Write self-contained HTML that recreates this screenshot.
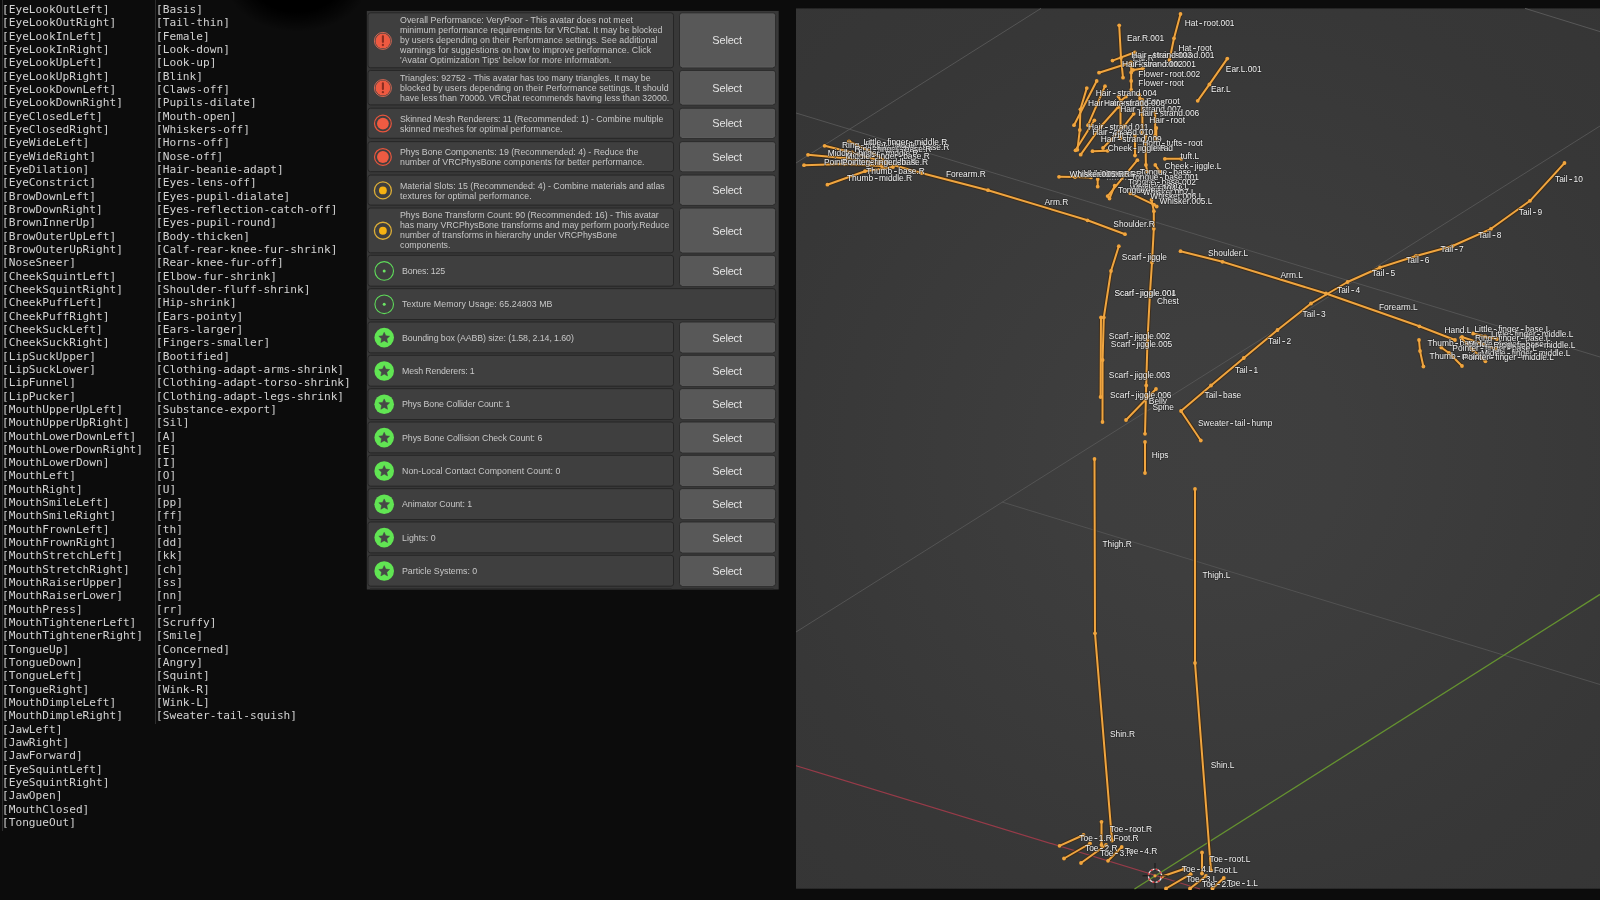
<!DOCTYPE html>
<html lang="en"><head><meta charset="utf-8"><title>Avatar blendshapes, performance stats and armature</title>
<style>
html,body{margin:0;padding:0;background:#0c0c0c;}
body{width:1600px;height:900px;position:relative;overflow:hidden;font-family:"Liberation Sans",sans-serif;}
.blob{position:absolute;left:225px;top:-72px;width:144px;height:104px;background:radial-gradient(ellipse closest-side at center,#000 0%,#000 62%,rgba(0,0,0,0.55) 80%,rgba(0,0,0,0) 100%);}
.col{position:absolute;top:3.2px;margin:0;font-family:"DejaVu Sans Mono","Liberation Mono",monospace;font-size:11.16px;line-height:13.333px;color:#d2d2d2;white-space:nowrap;}
.vl{position:absolute;width:1px;background:#2e2e2e;top:0;}
#c1{left:2.25px;}
#c2{left:155.7px;}
.col div{height:13.333px;}
#panel{position:absolute;left:0;top:0;}
.txt{position:absolute;left:400.2px;font-size:8.8px;line-height:10px;color:#c8c8c8;white-space:pre;}
.txt.s{left:402.4px;}
.bt{position:absolute;left:678.8px;width:96.1px;line-height:14px;color:#e4e4e4;font-size:11px;letter-spacing:-0.2px;text-align:center;}
#vp{position:absolute;left:796px;top:8px;width:804px;height:882px;overflow:hidden;}
#vp svg{position:absolute;left:0;top:0;}
.col,.txt,.bt,#vp{will-change:transform;}
</style></head><body>
<div class="blob"></div>
<div class="vl" style="left:2px;height:831px"></div><div class="vl" style="left:154.6px;height:724px"></div>

<div class="col" id="c1"><div>[EyeLookOutLeft]</div><div>[EyeLookOutRight]</div><div>[EyeLookInLeft]</div><div>[EyeLookInRight]</div><div>[EyeLookUpLeft]</div><div>[EyeLookUpRight]</div><div>[EyeLookDownLeft]</div><div>[EyeLookDownRight]</div><div>[EyeClosedLeft]</div><div>[EyeClosedRight]</div><div>[EyeWideLeft]</div><div>[EyeWideRight]</div><div>[EyeDilation]</div><div>[EyeConstrict]</div><div>[BrowDownLeft]</div><div>[BrowDownRight]</div><div>[BrownInnerUp]</div><div>[BrowOuterUpLeft]</div><div>[BrowOuterUpRight]</div><div>[NoseSneer]</div><div>[CheekSquintLeft]</div><div>[CheekSquintRight]</div><div>[CheekPuffLeft]</div><div>[CheekPuffRight]</div><div>[CheekSuckLeft]</div><div>[CheekSuckRight]</div><div>[LipSuckUpper]</div><div>[LipSuckLower]</div><div>[LipFunnel]</div><div>[LipPucker]</div><div>[MouthUpperUpLeft]</div><div>[MouthUpperUpRight]</div><div>[MouthLowerDownLeft]</div><div>[MouthLowerDownRight]</div><div>[MouthLowerDown]</div><div>[MouthLeft]</div><div>[MouthRight]</div><div>[MouthSmileLeft]</div><div>[MouthSmileRight]</div><div>[MouthFrownLeft]</div><div>[MouthFrownRight]</div><div>[MouthStretchLeft]</div><div>[MouthStretchRight]</div><div>[MouthRaiserUpper]</div><div>[MouthRaiserLower]</div><div>[MouthPress]</div><div>[MouthTightenerLeft]</div><div>[MouthTightenerRight]</div><div>[TongueUp]</div><div>[TongueDown]</div><div>[TongueLeft]</div><div>[TongueRight]</div><div>[MouthDimpleLeft]</div><div>[MouthDimpleRight]</div><div>[JawLeft]</div><div>[JawRight]</div><div>[JawForward]</div><div>[EyeSquintLeft]</div><div>[EyeSquintRight]</div><div>[JawOpen]</div><div>[MouthClosed]</div><div>[TongueOut]</div></div>
<div class="col" id="c2"><div>[Basis]</div><div>[Tail-thin]</div><div>[Female]</div><div>[Look-down]</div><div>[Look-up]</div><div>[Blink]</div><div>[Claws-off]</div><div>[Pupils-dilate]</div><div>[Mouth-open]</div><div>[Whiskers-off]</div><div>[Horns-off]</div><div>[Nose-off]</div><div>[Hair-beanie-adapt]</div><div>[Eyes-lens-off]</div><div>[Eyes-pupil-dialate]</div><div>[Eyes-reflection-catch-off]</div><div>[Eyes-pupil-round]</div><div>[Body-thicken]</div><div>[Calf-rear-knee-fur-shrink]</div><div>[Rear-knee-fur-off]</div><div>[Elbow-fur-shrink]</div><div>[Shoulder-fluff-shrink]</div><div>[Hip-shrink]</div><div>[Ears-pointy]</div><div>[Ears-larger]</div><div>[Fingers-smaller]</div><div>[Bootified]</div><div>[Clothing-adapt-arms-shrink]</div><div>[Clothing-adapt-torso-shrink]</div><div>[Clothing-adapt-legs-shrink]</div><div>[Substance-export]</div><div>[Sil]</div><div>[A]</div><div>[E]</div><div>[I]</div><div>[O]</div><div>[U]</div><div>[pp]</div><div>[ff]</div><div>[th]</div><div>[dd]</div><div>[kk]</div><div>[ch]</div><div>[ss]</div><div>[nn]</div><div>[rr]</div><div>[Scruffy]</div><div>[Smile]</div><div>[Concerned]</div><div>[Angry]</div><div>[Squint]</div><div>[Wink-R]</div><div>[Wink-L]</div><div>[Sweater-tail-squish]</div></div>
<svg id="panel" width="800" height="600" viewBox="0 0 800 600">
<rect x="366.8" y="10.9" width="411.9" height="578.6" fill="#383838"/>
<rect x="368" y="12.80" width="305.50" height="55.00" rx="2.6" fill="#3f3f3f" stroke="#262626" stroke-width="1"/>
<rect x="679.5" y="12.80" width="96.1" height="55.00" rx="2.6" fill="#585858" stroke="#2b2b2b" stroke-width="1"/>
<path d="M682 67.05 H773" stroke="#676767" stroke-width="0.6" fill="none"/>
<g transform="translate(382.90 40.90)"><circle r="8.5" fill="none" stroke="#e06a55" stroke-width="0.9"/><circle r="7.45" fill="#ee5a41"/><rect x="-1.05" y="-5.7" width="2.1" height="7.6" rx="0.9" fill="#8a2d20"/><circle cy="4.1" r="1.15" fill="#8a2d20"/></g>
<rect x="368" y="70.40" width="305.50" height="34.50" rx="2.6" fill="#3f3f3f" stroke="#262626" stroke-width="1"/>
<rect x="679.5" y="70.40" width="96.1" height="34.50" rx="2.6" fill="#585858" stroke="#2b2b2b" stroke-width="1"/>
<path d="M682 104.15 H773" stroke="#676767" stroke-width="0.6" fill="none"/>
<g transform="translate(382.90 88.05)"><circle r="8.5" fill="none" stroke="#e06a55" stroke-width="0.9"/><circle r="7.45" fill="#ee5a41"/><rect x="-1.05" y="-5.7" width="2.1" height="7.6" rx="0.9" fill="#8a2d20"/><circle cy="4.1" r="1.15" fill="#8a2d20"/></g>
<rect x="368" y="108.20" width="305.50" height="30.10" rx="2.6" fill="#3f3f3f" stroke="#262626" stroke-width="1"/>
<rect x="679.5" y="108.20" width="96.1" height="30.10" rx="2.6" fill="#585858" stroke="#2b2b2b" stroke-width="1"/>
<path d="M682 137.55 H773" stroke="#676767" stroke-width="0.6" fill="none"/>
<g transform="translate(382.90 123.55)"><circle r="8.4" fill="none" stroke="#e8553d" stroke-width="1.2"/><circle r="5.9" fill="#ee5b42"/></g>
<rect x="368" y="141.65" width="305.50" height="30.05" rx="2.6" fill="#3f3f3f" stroke="#262626" stroke-width="1"/>
<rect x="679.5" y="141.65" width="96.1" height="30.05" rx="2.6" fill="#585858" stroke="#2b2b2b" stroke-width="1"/>
<path d="M682 170.95 H773" stroke="#676767" stroke-width="0.6" fill="none"/>
<g transform="translate(382.90 156.98)"><circle r="8.4" fill="none" stroke="#e8553d" stroke-width="1.2"/><circle r="5.9" fill="#ee5b42"/></g>
<rect x="368" y="175.05" width="305.50" height="30.05" rx="2.6" fill="#3f3f3f" stroke="#262626" stroke-width="1"/>
<rect x="679.5" y="175.05" width="96.1" height="30.05" rx="2.6" fill="#585858" stroke="#2b2b2b" stroke-width="1"/>
<path d="M682 204.35 H773" stroke="#676767" stroke-width="0.6" fill="none"/>
<g transform="translate(382.90 190.38)"><circle r="8.5" fill="none" stroke="#dcae38" stroke-width="1.3"/><circle r="3.9" fill="#f5b212"/></g>
<rect x="368" y="208.00" width="305.50" height="44.85" rx="2.6" fill="#3f3f3f" stroke="#262626" stroke-width="1"/>
<rect x="679.5" y="208.00" width="96.1" height="44.85" rx="2.6" fill="#585858" stroke="#2b2b2b" stroke-width="1"/>
<path d="M682 252.10 H773" stroke="#676767" stroke-width="0.6" fill="none"/>
<g transform="translate(382.90 230.73)"><circle r="8.5" fill="none" stroke="#dcae38" stroke-width="1.3"/><circle r="3.9" fill="#f5b212"/></g>
<rect x="368" y="255.30" width="305.50" height="30.90" rx="2.6" fill="#3f3f3f" stroke="#262626" stroke-width="1"/>
<rect x="679.5" y="255.30" width="96.1" height="30.90" rx="2.6" fill="#585858" stroke="#2b2b2b" stroke-width="1"/>
<path d="M682 285.45 H773" stroke="#676767" stroke-width="0.6" fill="none"/>
<g transform="translate(384.20 270.95)"><circle r="9.3" fill="none" stroke="#5fdc5a" stroke-width="1.1"/><circle r="1.5" fill="#6be564"/></g>
<rect x="368" y="288.63" width="407.60" height="30.90" rx="2.6" fill="#3f3f3f" stroke="#262626" stroke-width="1"/>
<g transform="translate(384.20 304.28)"><circle r="9.3" fill="none" stroke="#5fdc5a" stroke-width="1.1"/><circle r="1.5" fill="#6be564"/></g>
<rect x="368" y="321.97" width="305.50" height="30.90" rx="2.6" fill="#3f3f3f" stroke="#262626" stroke-width="1"/>
<rect x="679.5" y="321.97" width="96.1" height="30.90" rx="2.6" fill="#585858" stroke="#2b2b2b" stroke-width="1"/>
<path d="M682 352.12 H773" stroke="#676767" stroke-width="0.6" fill="none"/>
<g transform="translate(384.20 337.62)"><circle r="9.8" fill="#61e553"/><polygon points="0.00,-5.35 1.62,-1.87 5.42,-1.41 2.62,1.20 3.35,4.96 0.00,3.10 -3.35,4.96 -2.62,1.20 -5.42,-1.41 -1.62,-1.87" fill="#474747" stroke="#474747" stroke-width="0.5" stroke-linejoin="round"/></g>
<rect x="368" y="355.30" width="305.50" height="30.90" rx="2.6" fill="#3f3f3f" stroke="#262626" stroke-width="1"/>
<rect x="679.5" y="355.30" width="96.1" height="30.90" rx="2.6" fill="#585858" stroke="#2b2b2b" stroke-width="1"/>
<path d="M682 385.45 H773" stroke="#676767" stroke-width="0.6" fill="none"/>
<g transform="translate(384.20 370.95)"><circle r="9.8" fill="#61e553"/><polygon points="0.00,-5.35 1.62,-1.87 5.42,-1.41 2.62,1.20 3.35,4.96 0.00,3.10 -3.35,4.96 -2.62,1.20 -5.42,-1.41 -1.62,-1.87" fill="#474747" stroke="#474747" stroke-width="0.5" stroke-linejoin="round"/></g>
<rect x="368" y="388.63" width="305.50" height="30.90" rx="2.6" fill="#3f3f3f" stroke="#262626" stroke-width="1"/>
<rect x="679.5" y="388.63" width="96.1" height="30.90" rx="2.6" fill="#585858" stroke="#2b2b2b" stroke-width="1"/>
<path d="M682 418.78 H773" stroke="#676767" stroke-width="0.6" fill="none"/>
<g transform="translate(384.20 404.28)"><circle r="9.8" fill="#61e553"/><polygon points="0.00,-5.35 1.62,-1.87 5.42,-1.41 2.62,1.20 3.35,4.96 0.00,3.10 -3.35,4.96 -2.62,1.20 -5.42,-1.41 -1.62,-1.87" fill="#474747" stroke="#474747" stroke-width="0.5" stroke-linejoin="round"/></g>
<rect x="368" y="421.97" width="305.50" height="30.90" rx="2.6" fill="#3f3f3f" stroke="#262626" stroke-width="1"/>
<rect x="679.5" y="421.97" width="96.1" height="30.90" rx="2.6" fill="#585858" stroke="#2b2b2b" stroke-width="1"/>
<path d="M682 452.12 H773" stroke="#676767" stroke-width="0.6" fill="none"/>
<g transform="translate(384.20 437.62)"><circle r="9.8" fill="#61e553"/><polygon points="0.00,-5.35 1.62,-1.87 5.42,-1.41 2.62,1.20 3.35,4.96 0.00,3.10 -3.35,4.96 -2.62,1.20 -5.42,-1.41 -1.62,-1.87" fill="#474747" stroke="#474747" stroke-width="0.5" stroke-linejoin="round"/></g>
<rect x="368" y="455.30" width="305.50" height="30.90" rx="2.6" fill="#3f3f3f" stroke="#262626" stroke-width="1"/>
<rect x="679.5" y="455.30" width="96.1" height="30.90" rx="2.6" fill="#585858" stroke="#2b2b2b" stroke-width="1"/>
<path d="M682 485.45 H773" stroke="#676767" stroke-width="0.6" fill="none"/>
<g transform="translate(384.20 470.95)"><circle r="9.8" fill="#61e553"/><polygon points="0.00,-5.35 1.62,-1.87 5.42,-1.41 2.62,1.20 3.35,4.96 0.00,3.10 -3.35,4.96 -2.62,1.20 -5.42,-1.41 -1.62,-1.87" fill="#474747" stroke="#474747" stroke-width="0.5" stroke-linejoin="round"/></g>
<rect x="368" y="488.63" width="305.50" height="30.90" rx="2.6" fill="#3f3f3f" stroke="#262626" stroke-width="1"/>
<rect x="679.5" y="488.63" width="96.1" height="30.90" rx="2.6" fill="#585858" stroke="#2b2b2b" stroke-width="1"/>
<path d="M682 518.78 H773" stroke="#676767" stroke-width="0.6" fill="none"/>
<g transform="translate(384.20 504.28)"><circle r="9.8" fill="#61e553"/><polygon points="0.00,-5.35 1.62,-1.87 5.42,-1.41 2.62,1.20 3.35,4.96 0.00,3.10 -3.35,4.96 -2.62,1.20 -5.42,-1.41 -1.62,-1.87" fill="#474747" stroke="#474747" stroke-width="0.5" stroke-linejoin="round"/></g>
<rect x="368" y="521.96" width="305.50" height="30.90" rx="2.6" fill="#3f3f3f" stroke="#262626" stroke-width="1"/>
<rect x="679.5" y="521.96" width="96.1" height="30.90" rx="2.6" fill="#585858" stroke="#2b2b2b" stroke-width="1"/>
<path d="M682 552.11 H773" stroke="#676767" stroke-width="0.6" fill="none"/>
<g transform="translate(384.20 537.61)"><circle r="9.8" fill="#61e553"/><polygon points="0.00,-5.35 1.62,-1.87 5.42,-1.41 2.62,1.20 3.35,4.96 0.00,3.10 -3.35,4.96 -2.62,1.20 -5.42,-1.41 -1.62,-1.87" fill="#474747" stroke="#474747" stroke-width="0.5" stroke-linejoin="round"/></g>
<rect x="368" y="555.30" width="305.50" height="30.90" rx="2.6" fill="#3f3f3f" stroke="#262626" stroke-width="1"/>
<rect x="679.5" y="555.30" width="96.1" height="30.90" rx="2.6" fill="#585858" stroke="#2b2b2b" stroke-width="1"/>
<path d="M682 585.45 H773" stroke="#676767" stroke-width="0.6" fill="none"/>
<g transform="translate(384.20 570.95)"><circle r="9.8" fill="#61e553"/><polygon points="0.00,-5.35 1.62,-1.87 5.42,-1.41 2.62,1.20 3.35,4.96 0.00,3.10 -3.35,4.96 -2.62,1.20 -5.42,-1.41 -1.62,-1.87" fill="#474747" stroke="#474747" stroke-width="0.5" stroke-linejoin="round"/></g>
<path d="M370 588.9 H671.5 M681.5 588.9 H773.6" stroke="#2a2a2a" stroke-width="1.1" fill="none"/>
</svg>
<div class="txt" style="top:15px"><span style="letter-spacing:0.034px">Overall Performance: VeryPoor - This avatar does not meet</span><br><span style="letter-spacing:0.023px">minimum performance requirements for VRChat. It may be blocked</span><br><span style="letter-spacing:0.041px">by users depending on their Performance settings. See additional</span><br><span style="letter-spacing:0.062px">warnings for suggestions on how to improve performance. Click</span><br><span style="letter-spacing:0.073px">'Avatar Optimization Tips' below for more information.</span></div>
<div class="bt" style="top:33px">Select</div>
<div class="txt" style="top:73px"><span style="letter-spacing:0.036px">Triangles: 92752 - This avatar has too many triangles. It may be</span><br><span style="letter-spacing:0.055px">blocked by users depending on their Performance settings. It should</span><br><span style="letter-spacing:0.021px">have less than 70000. VRChat recommends having less than 32000.</span></div>
<div class="bt" style="top:81px">Select</div>
<div class="txt" style="top:114px"><span style="letter-spacing:-0.056px">Skinned Mesh Renderers: 11 (Recommended: 1) - Combine multiple</span><br><span style="letter-spacing:0.031px">skinned meshes for optimal performance.</span></div>
<div class="bt" style="top:116px">Select</div>
<div class="txt" style="top:147px"><span style="letter-spacing:-0.033px">Phys Bone Components: 19 (Recommended: 4) - Reduce the</span><br><span style="letter-spacing:0.027px">number of VRCPhysBone components for better performance.</span></div>
<div class="bt" style="top:150px">Select</div>
<div class="txt" style="top:181px"><span style="letter-spacing:-0.004px">Material Slots: 15 (Recommended: 4) - Combine materials and atlas</span><br><span style="letter-spacing:0.078px">textures for optimal performance.</span></div>
<div class="bt" style="top:183px">Select</div>
<div class="txt" style="top:210px"><span style="letter-spacing:-0.003px">Phys Bone Transform Count: 90 (Recommended: 16) - This avatar</span><br><span style="letter-spacing:-0.020px">has many VRCPhysBone transforms and may perform poorly.Reduce</span><br><span style="letter-spacing:-0.009px">number of transforms in hierarchy under VRCPhysBone</span><br><span style="letter-spacing:0.010px">components.</span></div>
<div class="bt" style="top:224px">Select</div>
<div class="txt s" style="top:266px"><span style="letter-spacing:-0.153px">Bones: 125</span></div>
<div class="bt" style="top:264px">Select</div>
<div class="txt s" style="top:299px"><span style="letter-spacing:0.070px">Texture Memory Usage: 65.24803 MB</span></div>
<div class="txt s" style="top:333px"><span style="letter-spacing:-0.087px">Bounding box (AABB) size: (1.58, 2.14, 1.60)</span></div>
<div class="bt" style="top:331px">Select</div>
<div class="txt s" style="top:366px"><span style="letter-spacing:-0.131px">Mesh Renderers: 1</span></div>
<div class="bt" style="top:364px">Select</div>
<div class="txt s" style="top:399px"><span style="letter-spacing:-0.083px">Phys Bone Collider Count: 1</span></div>
<div class="bt" style="top:397px">Select</div>
<div class="txt s" style="top:433px"><span style="letter-spacing:-0.031px">Phys Bone Collision Check Count: 6</span></div>
<div class="bt" style="top:431px">Select</div>
<div class="txt s" style="top:466px"><span style="letter-spacing:0.057px">Non-Local Contact Component Count: 0</span></div>
<div class="bt" style="top:464px">Select</div>
<div class="txt s" style="top:499px"><span style="letter-spacing:-0.043px">Animator Count: 1</span></div>
<div class="bt" style="top:497px">Select</div>
<div class="txt s" style="top:533px"><span style="letter-spacing:0.037px">Lights: 0</span></div>
<div class="bt" style="top:531px">Select</div>
<div class="txt s" style="top:566px"><span style="letter-spacing:-0.001px">Particle Systems: 0</span></div>
<div class="bt" style="top:564px">Select</div>
<div id="vp"><svg width="804" height="882" viewBox="796 8 804 882">
<defs><radialGradient id="vg" gradientUnits="userSpaceOnUse" cx="1215" cy="455" r="640"><stop offset="0" stop-color="#3f3f3f"/><stop offset="0.2" stop-color="#3e3e3e"/><stop offset="0.5" stop-color="#3a3a3a"/><stop offset="0.72" stop-color="#373737"/><stop offset="1" stop-color="#353535"/></radialGradient></defs>
<rect x="796" y="8.4" width="804" height="880.3" fill="url(#vg)"/>
<g fill="none" stroke-width="1">
<path d="M796 632 L1600 126" stroke="#545454"/>
<path d="M1002 502 L1600 684.5" stroke="#525252"/>
<path d="M796 113 L1600 357" stroke="#545454"/>
<path d="M796 163 L1041 8.4" stroke="#555555"/>
<path d="M1525 8.4 L1600 31.6" stroke="#585858"/>
<path d="M796 765.7 L1200 889" stroke="#983b49" stroke-width="1.2"/>
<path d="M1134.5 889 L1600 594.4" stroke="#659330" stroke-width="1.3"/>
</g>
<path d="M1069 178.6 L1136 178.6" stroke="#1c1c1c" stroke-width="0.8" fill="none" opacity="0.6"/>
<g fill="none" stroke="#3d2a15" stroke-opacity="0.85" stroke-width="4" stroke-linecap="round" stroke-linejoin="round">
<path d="M1180.5 14.0 L1174.0 38.3 L1169.5 60.0"/>
<path d="M1119.2 25.3 L1121.0 57.8 L1123.0 77.7"/>
<path d="M1135.0 52.3 L1112.5 60.6"/>
<path d="M1131.0 62.5 L1099.0 72.7"/>
<path d="M1131.2 66.0 L1131.2 72.5 L1131.2 81.0 L1131.2 90.0"/>
<path d="M1133.0 70.0 L1143.0 68.5"/>
<path d="M1227.3 58.6 L1209.4 84.4 L1197.7 100.8"/>
<path d="M1096.7 81.0 L1074.0 125.2"/>
<path d="M1086.8 88.1 L1080.4 109.3 L1079.8 130.0 L1077.4 149.8"/>
<path d="M1105.0 86.2 L1088.0 125.2"/>
<path d="M1094.4 120.3 L1075.5 150.3"/>
<path d="M1118.2 107.0 L1101.2 126.0 L1080.7 154.7"/>
<path d="M1118.6 96.5 L1120.5 101.0 L1120.5 138.0"/>
<path d="M1126.0 96.5 L1120.5 101.0"/>
<path d="M1133.7 113.8 L1124.2 126.0 L1103.0 148.0"/>
<path d="M1142.4 100.0 L1142.4 114.6 L1142.4 133.0"/>
<path d="M1155.2 112.0 L1155.2 135.7"/>
<path d="M1139.4 95.0 L1140.0 99.0"/>
<path d="M1135.0 135.7 L1135.0 155.5"/>
<path d="M1145.4 135.7 L1145.9 165.0 L1147.3 171.6"/>
<path d="M1156.3 128.0 L1156.3 140.0"/>
<path d="M1092.5 151.2 L1107.6 150.8"/>
<path d="M1164.8 158.8 L1181.3 158.8"/>
<path d="M1137.4 160.2 L1107.6 196.1"/>
<path d="M1155.3 165.0 L1159.6 171.6"/>
<path d="M1059.0 176.8 L1075.0 177.1 L1091.0 177.4"/>
<path d="M1097.7 179.1 L1097.7 186.7"/>
<path d="M1114.7 185.7 L1109.5 198.5"/>
<path d="M1130.3 193.3 L1153.9 204.6 L1156.7 206.5"/>
<path d="M1151.5 199.9 L1153.9 211.2"/>
<path d="M1125.0 234.2 L1087.5 220.3 L988.0 190.2 L921.3 173.0 L886.0 163.0"/>
<path d="M886.0 161.0 L868.0 150.5 L849.0 141.3"/>
<path d="M882.0 161.5 L852.0 152.5 L824.6 145.8"/>
<path d="M880.0 163.5 L846.0 158.2 L808.0 154.8"/>
<path d="M882.0 166.0 L844.0 164.0 L804.0 165.2"/>
<path d="M893.0 167.0 L865.0 171.2 L827.4 184.7"/>
<path d="M1153.8 211.0 L1153.8 228.8 L1152.0 262.5 L1150.0 292.5 L1147.5 340.0 L1146.2 385.5 L1145.0 433.8"/>
<path d="M1145.0 442.0 L1145.0 473.0"/>
<path d="M1118.8 246.2 L1111.0 271.0 L1103.8 317.5 L1102.6 360.0 L1102.5 422.0"/>
<path d="M1101.0 317.5 L1100.6 397.0"/>
<path d="M1156.0 389.0 L1126.0 420.0"/>
<path d="M1180.5 251.2 L1222.5 261.8 L1326.0 293.5 L1419.4 326.3 L1455.0 340.0"/>
<path d="M1419.0 340.0 L1420.0 351.0 L1423.4 366.5"/>
<path d="M1441.3 347.5 L1449.0 353.0 L1462.0 366.0"/>
<path d="M1461.0 338.0 L1473.0 350.0 L1485.4 361.3"/>
<path d="M1462.0 337.0 L1480.0 343.0 L1496.0 349.0"/>
<path d="M1473.0 333.5 L1485.0 336.5 L1497.0 339.0"/>
<path d="M1181.0 411.0 L1211.0 385.5 L1243.8 358.0 L1277.5 330.0 L1311.0 303.5 L1347.5 282.0 L1380.0 267.5 L1416.0 256.0 L1452.5 246.0 L1491.0 228.8 L1530.0 200.8 L1564.5 163.0"/>
<path d="M1181.0 411.0 L1200.8 440.5"/>
<path d="M1094.5 459.0 L1095.0 633.3 L1112.0 840.5"/>
<path d="M1195.0 489.0 L1195.0 663.0 L1211.0 870.5"/>
<path d="M1101.5 821.8 L1101.5 845.0"/>
<path d="M1083.5 835.0 L1059.5 845.8"/>
<path d="M1090.0 843.5 L1064.0 858.5"/>
<path d="M1106.0 845.0 L1081.0 863.0"/>
<path d="M1121.7 847.0 L1108.0 860.8"/>
<path d="M1202.0 852.5 L1202.0 873.5"/>
<path d="M1184.0 869.0 L1162.0 876.5"/>
<path d="M1190.7 874.2 L1166.0 888.5"/>
<path d="M1206.0 876.0 L1190.0 888.5"/>
<path d="M1223.8 878.0 L1212.5 888.5"/>
</g>
<g fill="none" stroke="#f0a53f" stroke-width="2" stroke-linecap="round" stroke-linejoin="round">
<path d="M1180.5 14.0 L1174.0 38.3 L1169.5 60.0"/>
<path d="M1119.2 25.3 L1121.0 57.8 L1123.0 77.7"/>
<path d="M1135.0 52.3 L1112.5 60.6"/>
<path d="M1131.0 62.5 L1099.0 72.7"/>
<path d="M1131.2 66.0 L1131.2 72.5 L1131.2 81.0 L1131.2 90.0"/>
<path d="M1133.0 70.0 L1143.0 68.5"/>
<path d="M1227.3 58.6 L1209.4 84.4 L1197.7 100.8"/>
<path d="M1096.7 81.0 L1074.0 125.2"/>
<path d="M1086.8 88.1 L1080.4 109.3 L1079.8 130.0 L1077.4 149.8"/>
<path d="M1105.0 86.2 L1088.0 125.2"/>
<path d="M1094.4 120.3 L1075.5 150.3"/>
<path d="M1118.2 107.0 L1101.2 126.0 L1080.7 154.7"/>
<path d="M1118.6 96.5 L1120.5 101.0 L1120.5 138.0"/>
<path d="M1126.0 96.5 L1120.5 101.0"/>
<path d="M1133.7 113.8 L1124.2 126.0 L1103.0 148.0"/>
<path d="M1142.4 100.0 L1142.4 114.6 L1142.4 133.0"/>
<path d="M1155.2 112.0 L1155.2 135.7"/>
<path d="M1139.4 95.0 L1140.0 99.0"/>
<path d="M1135.0 135.7 L1135.0 155.5"/>
<path d="M1145.4 135.7 L1145.9 165.0 L1147.3 171.6"/>
<path d="M1156.3 128.0 L1156.3 140.0"/>
<path d="M1092.5 151.2 L1107.6 150.8"/>
<path d="M1164.8 158.8 L1181.3 158.8"/>
<path d="M1137.4 160.2 L1107.6 196.1"/>
<path d="M1155.3 165.0 L1159.6 171.6"/>
<path d="M1059.0 176.8 L1075.0 177.1 L1091.0 177.4"/>
<path d="M1097.7 179.1 L1097.7 186.7"/>
<path d="M1114.7 185.7 L1109.5 198.5"/>
<path d="M1130.3 193.3 L1153.9 204.6 L1156.7 206.5"/>
<path d="M1151.5 199.9 L1153.9 211.2"/>
<path d="M1125.0 234.2 L1087.5 220.3 L988.0 190.2 L921.3 173.0 L886.0 163.0"/>
<path d="M886.0 161.0 L868.0 150.5 L849.0 141.3"/>
<path d="M882.0 161.5 L852.0 152.5 L824.6 145.8"/>
<path d="M880.0 163.5 L846.0 158.2 L808.0 154.8"/>
<path d="M882.0 166.0 L844.0 164.0 L804.0 165.2"/>
<path d="M893.0 167.0 L865.0 171.2 L827.4 184.7"/>
<path d="M1153.8 211.0 L1153.8 228.8 L1152.0 262.5 L1150.0 292.5 L1147.5 340.0 L1146.2 385.5 L1145.0 433.8"/>
<path d="M1145.0 442.0 L1145.0 473.0"/>
<path d="M1118.8 246.2 L1111.0 271.0 L1103.8 317.5 L1102.6 360.0 L1102.5 422.0"/>
<path d="M1101.0 317.5 L1100.6 397.0"/>
<path d="M1156.0 389.0 L1126.0 420.0"/>
<path d="M1180.5 251.2 L1222.5 261.8 L1326.0 293.5 L1419.4 326.3 L1455.0 340.0"/>
<path d="M1419.0 340.0 L1420.0 351.0 L1423.4 366.5"/>
<path d="M1441.3 347.5 L1449.0 353.0 L1462.0 366.0"/>
<path d="M1461.0 338.0 L1473.0 350.0 L1485.4 361.3"/>
<path d="M1462.0 337.0 L1480.0 343.0 L1496.0 349.0"/>
<path d="M1473.0 333.5 L1485.0 336.5 L1497.0 339.0"/>
<path d="M1181.0 411.0 L1211.0 385.5 L1243.8 358.0 L1277.5 330.0 L1311.0 303.5 L1347.5 282.0 L1380.0 267.5 L1416.0 256.0 L1452.5 246.0 L1491.0 228.8 L1530.0 200.8 L1564.5 163.0"/>
<path d="M1181.0 411.0 L1200.8 440.5"/>
<path d="M1094.5 459.0 L1095.0 633.3 L1112.0 840.5"/>
<path d="M1195.0 489.0 L1195.0 663.0 L1211.0 870.5"/>
<path d="M1101.5 821.8 L1101.5 845.0"/>
<path d="M1083.5 835.0 L1059.5 845.8"/>
<path d="M1090.0 843.5 L1064.0 858.5"/>
<path d="M1106.0 845.0 L1081.0 863.0"/>
<path d="M1121.7 847.0 L1108.0 860.8"/>
<path d="M1202.0 852.5 L1202.0 873.5"/>
<path d="M1184.0 869.0 L1162.0 876.5"/>
<path d="M1190.7 874.2 L1166.0 888.5"/>
<path d="M1206.0 876.0 L1190.0 888.5"/>
<path d="M1223.8 878.0 L1212.5 888.5"/>
</g>
<g fill="#f0a53f">
<circle cx="1180.5" cy="14.0" r="1.9"/>
<circle cx="1174.0" cy="38.3" r="1.9"/>
<circle cx="1169.5" cy="60.0" r="1.9"/>
<circle cx="1119.2" cy="25.3" r="1.9"/>
<circle cx="1121.0" cy="57.8" r="1.9"/>
<circle cx="1123.0" cy="77.7" r="1.9"/>
<circle cx="1135.0" cy="52.3" r="1.9"/>
<circle cx="1112.5" cy="60.6" r="1.9"/>
<circle cx="1131.0" cy="62.5" r="1.9"/>
<circle cx="1099.0" cy="72.7" r="1.9"/>
<circle cx="1131.2" cy="66.0" r="1.9"/>
<circle cx="1131.2" cy="72.5" r="1.9"/>
<circle cx="1131.2" cy="81.0" r="1.9"/>
<circle cx="1131.2" cy="90.0" r="1.9"/>
<circle cx="1133.0" cy="70.0" r="1.9"/>
<circle cx="1143.0" cy="68.5" r="1.9"/>
<circle cx="1227.3" cy="58.6" r="1.9"/>
<circle cx="1209.4" cy="84.4" r="1.9"/>
<circle cx="1197.7" cy="100.8" r="1.9"/>
<circle cx="1096.7" cy="81.0" r="1.9"/>
<circle cx="1074.0" cy="125.2" r="1.9"/>
<circle cx="1086.8" cy="88.1" r="1.9"/>
<circle cx="1080.4" cy="109.3" r="1.9"/>
<circle cx="1079.8" cy="130.0" r="1.9"/>
<circle cx="1077.4" cy="149.8" r="1.9"/>
<circle cx="1105.0" cy="86.2" r="1.9"/>
<circle cx="1088.0" cy="125.2" r="1.9"/>
<circle cx="1094.4" cy="120.3" r="1.9"/>
<circle cx="1075.5" cy="150.3" r="1.9"/>
<circle cx="1118.2" cy="107.0" r="1.9"/>
<circle cx="1101.2" cy="126.0" r="1.9"/>
<circle cx="1080.7" cy="154.7" r="1.9"/>
<circle cx="1118.6" cy="96.5" r="1.9"/>
<circle cx="1120.5" cy="101.0" r="1.9"/>
<circle cx="1120.5" cy="138.0" r="1.9"/>
<circle cx="1126.0" cy="96.5" r="1.9"/>
<circle cx="1133.7" cy="113.8" r="1.9"/>
<circle cx="1124.2" cy="126.0" r="1.9"/>
<circle cx="1103.0" cy="148.0" r="1.9"/>
<circle cx="1142.4" cy="100.0" r="1.9"/>
<circle cx="1142.4" cy="114.6" r="1.9"/>
<circle cx="1142.4" cy="133.0" r="1.9"/>
<circle cx="1155.2" cy="112.0" r="1.9"/>
<circle cx="1155.2" cy="135.7" r="1.9"/>
<circle cx="1139.4" cy="95.0" r="1.9"/>
<circle cx="1140.0" cy="99.0" r="1.9"/>
<circle cx="1135.0" cy="135.7" r="1.9"/>
<circle cx="1135.0" cy="155.5" r="1.9"/>
<circle cx="1145.4" cy="135.7" r="1.9"/>
<circle cx="1145.9" cy="165.0" r="1.9"/>
<circle cx="1147.3" cy="171.6" r="1.9"/>
<circle cx="1156.3" cy="128.0" r="1.9"/>
<circle cx="1156.3" cy="140.0" r="1.9"/>
<circle cx="1092.5" cy="151.2" r="1.9"/>
<circle cx="1107.6" cy="150.8" r="1.9"/>
<circle cx="1164.8" cy="158.8" r="1.9"/>
<circle cx="1181.3" cy="158.8" r="1.9"/>
<circle cx="1137.4" cy="160.2" r="1.9"/>
<circle cx="1107.6" cy="196.1" r="1.9"/>
<circle cx="1155.3" cy="165.0" r="1.9"/>
<circle cx="1159.6" cy="171.6" r="1.9"/>
<circle cx="1059.0" cy="176.8" r="1.9"/>
<circle cx="1075.0" cy="177.1" r="1.9"/>
<circle cx="1091.0" cy="177.4" r="1.9"/>
<circle cx="1097.7" cy="179.1" r="1.9"/>
<circle cx="1097.7" cy="186.7" r="1.9"/>
<circle cx="1114.7" cy="185.7" r="1.9"/>
<circle cx="1109.5" cy="198.5" r="1.9"/>
<circle cx="1130.3" cy="193.3" r="1.9"/>
<circle cx="1153.9" cy="204.6" r="1.9"/>
<circle cx="1156.7" cy="206.5" r="1.9"/>
<circle cx="1151.5" cy="199.9" r="1.9"/>
<circle cx="1153.9" cy="211.2" r="1.9"/>
<circle cx="1125.0" cy="234.2" r="1.9"/>
<circle cx="1087.5" cy="220.3" r="1.9"/>
<circle cx="988.0" cy="190.2" r="1.9"/>
<circle cx="921.3" cy="173.0" r="1.9"/>
<circle cx="886.0" cy="163.0" r="1.9"/>
<circle cx="886.0" cy="161.0" r="1.9"/>
<circle cx="868.0" cy="150.5" r="1.9"/>
<circle cx="849.0" cy="141.3" r="1.9"/>
<circle cx="882.0" cy="161.5" r="1.9"/>
<circle cx="852.0" cy="152.5" r="1.9"/>
<circle cx="824.6" cy="145.8" r="1.9"/>
<circle cx="880.0" cy="163.5" r="1.9"/>
<circle cx="846.0" cy="158.2" r="1.9"/>
<circle cx="808.0" cy="154.8" r="1.9"/>
<circle cx="882.0" cy="166.0" r="1.9"/>
<circle cx="844.0" cy="164.0" r="1.9"/>
<circle cx="804.0" cy="165.2" r="1.9"/>
<circle cx="893.0" cy="167.0" r="1.9"/>
<circle cx="865.0" cy="171.2" r="1.9"/>
<circle cx="827.4" cy="184.7" r="1.9"/>
<circle cx="1153.8" cy="228.8" r="1.9"/>
<circle cx="1152.0" cy="262.5" r="1.9"/>
<circle cx="1150.0" cy="292.5" r="1.9"/>
<circle cx="1147.5" cy="340.0" r="1.9"/>
<circle cx="1146.2" cy="385.5" r="1.9"/>
<circle cx="1145.0" cy="433.8" r="1.9"/>
<circle cx="1145.0" cy="442.0" r="1.9"/>
<circle cx="1145.0" cy="473.0" r="1.9"/>
<circle cx="1118.8" cy="246.2" r="1.9"/>
<circle cx="1111.0" cy="271.0" r="1.9"/>
<circle cx="1103.8" cy="317.5" r="1.9"/>
<circle cx="1102.6" cy="360.0" r="1.9"/>
<circle cx="1102.5" cy="422.0" r="1.9"/>
<circle cx="1101.0" cy="317.5" r="1.9"/>
<circle cx="1100.6" cy="397.0" r="1.9"/>
<circle cx="1156.0" cy="389.0" r="1.9"/>
<circle cx="1126.0" cy="420.0" r="1.9"/>
<circle cx="1180.5" cy="251.2" r="1.9"/>
<circle cx="1222.5" cy="261.8" r="1.9"/>
<circle cx="1326.0" cy="293.5" r="1.9"/>
<circle cx="1419.4" cy="326.3" r="1.9"/>
<circle cx="1455.0" cy="340.0" r="1.9"/>
<circle cx="1419.0" cy="340.0" r="1.9"/>
<circle cx="1420.0" cy="351.0" r="1.9"/>
<circle cx="1423.4" cy="366.5" r="1.9"/>
<circle cx="1441.3" cy="347.5" r="1.9"/>
<circle cx="1449.0" cy="353.0" r="1.9"/>
<circle cx="1462.0" cy="366.0" r="1.9"/>
<circle cx="1461.0" cy="338.0" r="1.9"/>
<circle cx="1473.0" cy="350.0" r="1.9"/>
<circle cx="1485.4" cy="361.3" r="1.9"/>
<circle cx="1462.0" cy="337.0" r="1.9"/>
<circle cx="1480.0" cy="343.0" r="1.9"/>
<circle cx="1496.0" cy="349.0" r="1.9"/>
<circle cx="1473.0" cy="333.5" r="1.9"/>
<circle cx="1485.0" cy="336.5" r="1.9"/>
<circle cx="1497.0" cy="339.0" r="1.9"/>
<circle cx="1181.0" cy="411.0" r="1.9"/>
<circle cx="1211.0" cy="385.5" r="1.9"/>
<circle cx="1243.8" cy="358.0" r="1.9"/>
<circle cx="1277.5" cy="330.0" r="1.9"/>
<circle cx="1311.0" cy="303.5" r="1.9"/>
<circle cx="1347.5" cy="282.0" r="1.9"/>
<circle cx="1380.0" cy="267.5" r="1.9"/>
<circle cx="1416.0" cy="256.0" r="1.9"/>
<circle cx="1452.5" cy="246.0" r="1.9"/>
<circle cx="1491.0" cy="228.8" r="1.9"/>
<circle cx="1530.0" cy="200.8" r="1.9"/>
<circle cx="1564.5" cy="163.0" r="1.9"/>
<circle cx="1200.8" cy="440.5" r="1.9"/>
<circle cx="1094.5" cy="459.0" r="1.9"/>
<circle cx="1095.0" cy="633.3" r="1.9"/>
<circle cx="1112.0" cy="840.5" r="1.9"/>
<circle cx="1195.0" cy="489.0" r="1.9"/>
<circle cx="1195.0" cy="663.0" r="1.9"/>
<circle cx="1211.0" cy="870.5" r="1.9"/>
<circle cx="1101.5" cy="821.8" r="1.9"/>
<circle cx="1101.5" cy="845.0" r="1.9"/>
<circle cx="1083.5" cy="835.0" r="1.9"/>
<circle cx="1059.5" cy="845.8" r="1.9"/>
<circle cx="1090.0" cy="843.5" r="1.9"/>
<circle cx="1064.0" cy="858.5" r="1.9"/>
<circle cx="1106.0" cy="845.0" r="1.9"/>
<circle cx="1081.0" cy="863.0" r="1.9"/>
<circle cx="1121.7" cy="847.0" r="1.9"/>
<circle cx="1108.0" cy="860.8" r="1.9"/>
<circle cx="1202.0" cy="852.5" r="1.9"/>
<circle cx="1202.0" cy="873.5" r="1.9"/>
<circle cx="1184.0" cy="869.0" r="1.9"/>
<circle cx="1162.0" cy="876.5" r="1.9"/>
<circle cx="1190.7" cy="874.2" r="1.9"/>
<circle cx="1166.0" cy="888.5" r="1.9"/>
<circle cx="1206.0" cy="876.0" r="1.9"/>
<circle cx="1190.0" cy="888.5" r="1.9"/>
<circle cx="1223.8" cy="878.0" r="1.9"/>
<circle cx="1212.5" cy="888.5" r="1.9"/>
</g>
<path d="M1107 179.3 L1136 179.3" stroke="#d8d8d8" stroke-width="0.8" stroke-dasharray="1 1.6" fill="none"/>
<g fill="none"><circle cx="1155" cy="875.8" r="6.6" stroke="#e8e8e8" stroke-width="1.3"/><circle cx="1155" cy="875.8" r="6.6" stroke="#d8343a" stroke-width="1.3" stroke-dasharray="2.6 2.6"/><path d="M1155 863 V871 M1155 880.5 V888.5 M1142.5 875.8 H1150.5 M1159.5 875.8 H1167.5" stroke="#161616" stroke-width="1"/></g>
<circle cx="1155" cy="875.8" r="1.6" fill="#f0a53f"/>
<g font-family="Liberation Sans, sans-serif" font-size="8.4" fill="#f2f2f2" stroke="#202020" stroke-width="1.3" stroke-opacity="0.6" stroke-linejoin="round" paint-order="stroke" style="white-space:pre">
<text x="1184.7" y="26.2">Hat<tspan dx="1.1" font-size="11.5">-</tspan><tspan dx="1.1">root.001</tspan></text>
<text x="1127.0" y="41.4">Ear.R.001</text>
<text x="1178.4" y="51.2">Hat<tspan dx="1.1" font-size="11.5">-</tspan><tspan dx="1.1">root</tspan></text>
<text x="1153.5" y="58.0">Hair<tspan dx="1.1" font-size="11.5">-</tspan><tspan dx="1.1">strand.001</tspan></text>
<text x="1132.8" y="61.2">Ear.R</text>
<text x="1134.0" y="67.0">Flower<tspan dx="1.1" font-size="11.5">-</tspan><tspan dx="1.1">root.001</tspan></text>
<text x="1225.8" y="71.5">Ear.L.001</text>
<text x="1138.3" y="76.5">Flower<tspan dx="1.1" font-size="11.5">-</tspan><tspan dx="1.1">root.002</tspan></text>
<text x="1138.3" y="85.5">Flower<tspan dx="1.1" font-size="11.5">-</tspan><tspan dx="1.1">root</tspan></text>
<text x="1211.0" y="92.2">Ear.L</text>
<text x="1146.0" y="104.0">Ear<tspan dx="1.1" font-size="11.5">-</tspan><tspan dx="1.1">root</tspan></text>
<text x="1088.0" y="106.2">Hair<tspan dx="1.1" font-size="11.5">-</tspan><tspan dx="1.1">strand.005</tspan></text>
<text x="1120.3" y="112.2">Hair<tspan dx="1.1" font-size="11.5">-</tspan><tspan dx="1.1">strand.007</tspan></text>
<text x="1138.3" y="116.4">Hair<tspan dx="1.1" font-size="11.5">-</tspan><tspan dx="1.1">strand.006</tspan></text>
<text x="1149.2" y="122.6">Hair<tspan dx="1.1" font-size="11.5">-</tspan><tspan dx="1.1">root</tspan></text>
<text x="1088.0" y="130.0">Hair<tspan dx="1.1" font-size="11.5">-</tspan><tspan dx="1.1">strand.011</tspan></text>
<text x="1092.2" y="135.2">Hair<tspan dx="1.1" font-size="11.5">-</tspan><tspan dx="1.1">strand.010</tspan></text>
<text x="1112.5" y="137.5">tuft.R</text>
<text x="1100.8" y="142.2">Hair<tspan dx="1.1" font-size="11.5">-</tspan><tspan dx="1.1">strand.009</tspan></text>
<text x="1142.2" y="146.0">Horn<tspan dx="1.1" font-size="11.5">-</tspan><tspan dx="1.1">tufts</tspan><tspan dx="1.1" font-size="11.5">-</tspan><tspan dx="1.1">root</tspan></text>
<text x="1153.0" y="151.0">Head</text>
<text x="1180.5" y="159.0">tuft.L</text>
<text x="1164.5" y="168.8">Cheek<tspan dx="1.1" font-size="11.5">-</tspan><tspan dx="1.1">jiggle.L</tspan></text>
<text x="1139.8" y="175.0">Tongue<tspan dx="1.1" font-size="11.5">-</tspan><tspan dx="1.1">base</tspan></text>
<text x="1087.5" y="176.9">Whisker.004.R</text>
<text x="1081.5" y="176.9">Whisker.007.R</text>
<text x="1075.5" y="176.9">Whisker.006.R</text>
<text x="1131.0" y="179.7">Tongue<tspan dx="1.1" font-size="11.5">-</tspan><tspan dx="1.1">base.001</tspan></text>
<text x="1128.0" y="185.0">Tongue<tspan dx="1.1" font-size="11.5">-</tspan><tspan dx="1.1">base.002</tspan></text>
<text x="1136.0" y="189.0">Whisker.003.L</text>
<text x="1130.0" y="191.0">Whisker.004.L</text>
<text x="1118.0" y="193.0">Tongue<tspan dx="1.1" font-size="11.5">-</tspan><tspan dx="1.1">tip</tspan></text>
<text x="1142.6" y="195.3">Whisker.007.L</text>
<text x="1150.3" y="199.2">Whisker.006.L</text>
<text x="1159.4" y="204.4">Whisker.005.L</text>
<text x="1044.5" y="205.0">Arm.R</text>
<text x="1113.3" y="226.8">Shoulder.R</text>
<text x="872.0" y="149.6">Little<tspan dx="1.1" font-size="11.5">-</tspan><tspan dx="1.1">finger</tspan><tspan dx="1.1" font-size="11.5">-</tspan><tspan dx="1.1">base.R</tspan></text>
<text x="842.0" y="148.2">Ring<tspan dx="1.1" font-size="11.5">-</tspan><tspan dx="1.1">finger</tspan><tspan dx="1.1" font-size="11.5">-</tspan><tspan dx="1.1">middle.R</tspan></text>
<text x="854.5" y="152.0">Ring<tspan dx="1.1" font-size="11.5">-</tspan><tspan dx="1.1">finger</tspan><tspan dx="1.1" font-size="11.5">-</tspan><tspan dx="1.1">base.R</tspan></text>
<text x="827.7" y="156.0">Middle<tspan dx="1.1" font-size="11.5">-</tspan><tspan dx="1.1">finger</tspan><tspan dx="1.1" font-size="11.5">-</tspan><tspan dx="1.1">middle.R</tspan></text>
<text x="845.5" y="158.5">Middle<tspan dx="1.1" font-size="11.5">-</tspan><tspan dx="1.1">finger</tspan><tspan dx="1.1" font-size="11.5">-</tspan><tspan dx="1.1">base.R</tspan></text>
<text x="824.0" y="164.8">Pointer<tspan dx="1.1" font-size="11.5">-</tspan><tspan dx="1.1">finger</tspan><tspan dx="1.1" font-size="11.5">-</tspan><tspan dx="1.1">middle.R</tspan></text>
<text x="842.0" y="164.8">Pointer<tspan dx="1.1" font-size="11.5">-</tspan><tspan dx="1.1">finger</tspan><tspan dx="1.1" font-size="11.5">-</tspan><tspan dx="1.1">base.R</tspan></text>
<text x="847.0" y="180.6">Thumb<tspan dx="1.1" font-size="11.5">-</tspan><tspan dx="1.1">middle.R</tspan></text>
<text x="945.9" y="177.2">Forearm.R</text>
<text x="1121.8" y="259.5">Scarf<tspan dx="1.1" font-size="11.5">-</tspan><tspan dx="1.1">jiggle</tspan></text>
<text x="1208.0" y="256.0">Shoulder.L</text>
<text x="1280.5" y="277.5">Arm.L</text>
<text x="1371.8" y="275.8">Tail<tspan dx="1.1" font-size="11.5">-</tspan><tspan dx="1.1">5</tspan></text>
<text x="1337.0" y="293.0">Tail<tspan dx="1.1" font-size="11.5">-</tspan><tspan dx="1.1">4</tspan></text>
<text x="1114.5" y="295.5">Scarf<tspan dx="1.1" font-size="11.5">-</tspan><tspan dx="1.1">jiggle.004</tspan></text>
<text x="1114.5" y="295.5">Scarf<tspan dx="1.1" font-size="11.5">-</tspan><tspan dx="1.1">jiggle.001</tspan></text>
<text x="1157.0" y="303.8">Chest</text>
<text x="1379.0" y="309.5">Forearm.L</text>
<text x="1302.5" y="317.0">Tail<tspan dx="1.1" font-size="11.5">-</tspan><tspan dx="1.1">3</tspan></text>
<text x="1108.8" y="339.0">Scarf<tspan dx="1.1" font-size="11.5">-</tspan><tspan dx="1.1">jiggle.002</tspan></text>
<text x="1110.8" y="346.8">Scarf<tspan dx="1.1" font-size="11.5">-</tspan><tspan dx="1.1">jiggle.005</tspan></text>
<text x="1268.0" y="344.0">Tail<tspan dx="1.1" font-size="11.5">-</tspan><tspan dx="1.1">2</tspan></text>
<text x="1235.0" y="373.0">Tail<tspan dx="1.1" font-size="11.5">-</tspan><tspan dx="1.1">1</tspan></text>
<text x="1108.8" y="378.0">Scarf<tspan dx="1.1" font-size="11.5">-</tspan><tspan dx="1.1">jiggle.003</tspan></text>
<text x="1110.0" y="398.0">Scarf<tspan dx="1.1" font-size="11.5">-</tspan><tspan dx="1.1">jiggle.006</tspan></text>
<text x="1204.5" y="398.0">Tail<tspan dx="1.1" font-size="11.5">-</tspan><tspan dx="1.1">base</tspan></text>
<text x="1148.8" y="404.0">Belly</text>
<text x="1152.5" y="410.0">Spine</text>
<text x="1198.0" y="426.0">Sweater<tspan dx="1.1" font-size="11.5">-</tspan><tspan dx="1.1">tail</tspan><tspan dx="1.1" font-size="11.5">-</tspan><tspan dx="1.1">hump</tspan></text>
<text x="1151.8" y="457.5">Hips</text>
<text x="1102.5" y="546.8">Thigh.R</text>
<text x="1202.5" y="577.5">Thigh.L</text>
<text x="1110.0" y="736.7">Shin.R</text>
<text x="1210.7" y="767.7">Shin.L</text>
<text x="1406.2" y="262.5">Tail<tspan dx="1.1" font-size="11.5">-</tspan><tspan dx="1.1">6</tspan></text>
<text x="1440.5" y="252.0">Tail<tspan dx="1.1" font-size="11.5">-</tspan><tspan dx="1.1">7</tspan></text>
<text x="1478.2" y="238.2">Tail<tspan dx="1.1" font-size="11.5">-</tspan><tspan dx="1.1">8</tspan></text>
<text x="1518.8" y="214.5">Tail<tspan dx="1.1" font-size="11.5">-</tspan><tspan dx="1.1">9</tspan></text>
<text x="1555.0" y="182.0">Tail<tspan dx="1.1" font-size="11.5">-</tspan><tspan dx="1.1">10</tspan></text>
<text x="1444.5" y="333.0">Hand.L</text>
<text x="1474.4" y="332.0">Little<tspan dx="1.1" font-size="11.5">-</tspan><tspan dx="1.1">finger</tspan><tspan dx="1.1" font-size="11.5">-</tspan><tspan dx="1.1">base.L</tspan></text>
<text x="1491.0" y="336.5">Little<tspan dx="1.1" font-size="11.5">-</tspan><tspan dx="1.1">finger</tspan><tspan dx="1.1" font-size="11.5">-</tspan><tspan dx="1.1">middle.L</tspan></text>
<text x="1475.0" y="340.6">Ring<tspan dx="1.1" font-size="11.5">-</tspan><tspan dx="1.1">finger</tspan><tspan dx="1.1" font-size="11.5">-</tspan><tspan dx="1.1">base.L</tspan></text>
<text x="1427.5" y="345.5">Thumb<tspan dx="1.1" font-size="11.5">-</tspan><tspan dx="1.1">base.L</tspan></text>
<text x="1468.0" y="347.0">Middle<tspan dx="1.1" font-size="11.5">-</tspan><tspan dx="1.1">finger</tspan><tspan dx="1.1" font-size="11.5">-</tspan><tspan dx="1.1">base.L</tspan></text>
<text x="1493.6" y="347.5">Ring<tspan dx="1.1" font-size="11.5">-</tspan><tspan dx="1.1">finger</tspan><tspan dx="1.1" font-size="11.5">-</tspan><tspan dx="1.1">middle.L</tspan></text>
<text x="1452.3" y="351.0">Pointer<tspan dx="1.1" font-size="11.5">-</tspan><tspan dx="1.1">finger</tspan><tspan dx="1.1" font-size="11.5">-</tspan><tspan dx="1.1">base.L</tspan></text>
<text x="1481.0" y="355.8">Middle<tspan dx="1.1" font-size="11.5">-</tspan><tspan dx="1.1">finger</tspan><tspan dx="1.1" font-size="11.5">-</tspan><tspan dx="1.1">middle.L</tspan></text>
<text x="1429.6" y="359.0">Thumb<tspan dx="1.1" font-size="11.5">-</tspan><tspan dx="1.1">middle.L</tspan></text>
<text x="1462.6" y="360.0">Pointer<tspan dx="1.1" font-size="11.5">-</tspan><tspan dx="1.1">finger</tspan><tspan dx="1.1" font-size="11.5">-</tspan><tspan dx="1.1">middle.L</tspan></text>
<text x="1109.8" y="832.2">Toe<tspan dx="1.1" font-size="11.5">-</tspan><tspan dx="1.1">root.R</tspan></text>
<text x="1079.3" y="841.2">Toe<tspan dx="1.1" font-size="11.5">-</tspan><tspan dx="1.1">1.R</tspan></text>
<text x="1113.5" y="841.2">Foot.R</text>
<text x="1085.0" y="851.0">Toe<tspan dx="1.1" font-size="11.5">-</tspan><tspan dx="1.1">2.R</tspan></text>
<text x="1100.0" y="855.8">Toe<tspan dx="1.1" font-size="11.5">-</tspan><tspan dx="1.1">3.R</tspan></text>
<text x="1124.8" y="854.3">Toe<tspan dx="1.1" font-size="11.5">-</tspan><tspan dx="1.1">4.R</tspan></text>
<text x="1209.5" y="862.2">Toe<tspan dx="1.1" font-size="11.5">-</tspan><tspan dx="1.1">root.L</tspan></text>
<text x="1181.8" y="871.7">Toe<tspan dx="1.1" font-size="11.5">-</tspan><tspan dx="1.1">4.L</tspan></text>
<text x="1214.0" y="872.8">Foot.L</text>
<text x="1186.2" y="881.8">Toe<tspan dx="1.1" font-size="11.5">-</tspan><tspan dx="1.1">3.L</tspan></text>
<text x="1202.0" y="887.0">Toe<tspan dx="1.1" font-size="11.5">-</tspan><tspan dx="1.1">2.L</tspan></text>
<text x="1226.8" y="885.5">Toe<tspan dx="1.1" font-size="11.5">-</tspan><tspan dx="1.1">1.L</tspan></text>
<text x="1131.2" y="57.8">Hair<tspan dx="1.1" font-size="11.5">-</tspan><tspan dx="1.1">strand.003</tspan></text>
<text x="1121.9" y="67.2">Hair<tspan dx="1.1" font-size="11.5">-</tspan><tspan dx="1.1">strand.002</tspan></text>
<text x="1095.8" y="95.6">Hair<tspan dx="1.1" font-size="11.5">-</tspan><tspan dx="1.1">strand.004</tspan></text>
<text x="1104.0" y="106.0">Hair<tspan dx="1.1" font-size="11.5">-</tspan><tspan dx="1.1">strand.008</tspan></text>
<text x="1107.8" y="151.2">Cheek<tspan dx="1.1" font-size="11.5">-</tspan><tspan dx="1.1">jiggle.R</tspan></text>
<text x="1069.5" y="176.9">Whisker.005.R</text>
<text x="863.5" y="144.8">Little<tspan dx="1.1" font-size="11.5">-</tspan><tspan dx="1.1">finger</tspan><tspan dx="1.1" font-size="11.5">-</tspan><tspan dx="1.1">middle.R</tspan></text>
<text x="866.2" y="174.4">Thumb<tspan dx="1.1" font-size="11.5">-</tspan><tspan dx="1.1">base.R</tspan></text>
</g>
</svg></div>
</body></html>
